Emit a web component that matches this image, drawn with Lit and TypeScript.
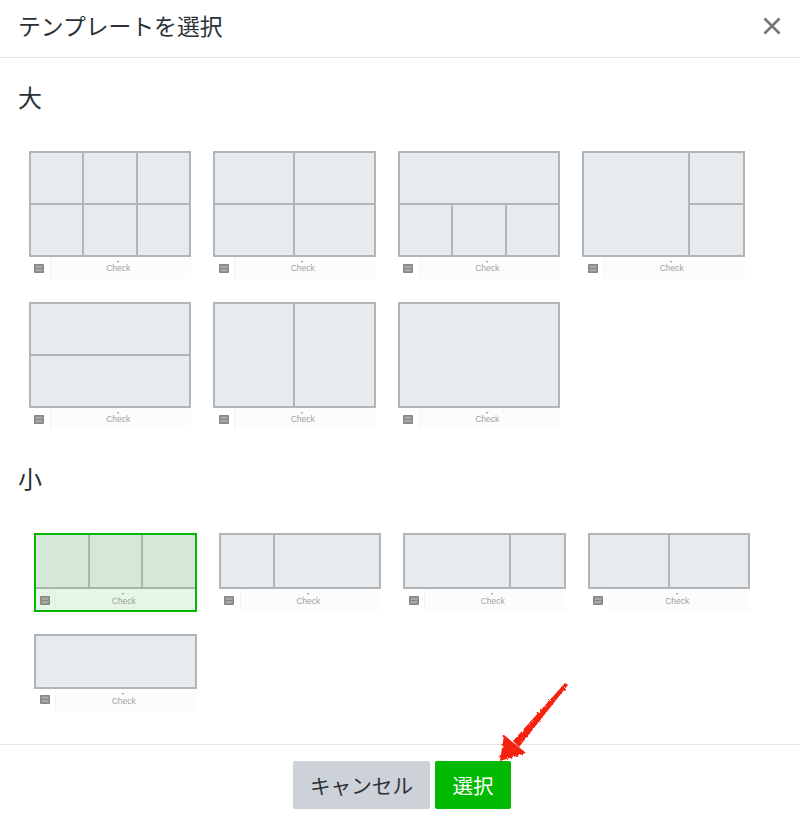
import { LitElement, html, css } from "lit";
import { customElement, property } from "lit/decorators.js";

type Layout = { cols: string; rows: string; cells: string[]; height?: number };

const large: Layout[] = [
  { cols: "1fr 1fr 1fr", rows: "1fr 1fr", cells: ["auto", "auto", "auto", "auto", "auto", "auto"] },
  { cols: "1fr 1fr", rows: "1fr 1fr", cells: ["auto", "auto", "auto", "auto"] },
  { cols: "1fr 1fr 1fr", rows: "1fr 1fr", cells: ["1 / 1 / 2 / 4", "auto", "auto", "auto"] },
  { cols: "2fr 1fr", rows: "1fr 1fr", cells: ["1 / 1 / 3 / 2", "auto", "auto"] },
  { cols: "1fr", rows: "1fr 1fr", cells: ["auto", "auto"] },
  { cols: "1fr 1fr", rows: "1fr", cells: ["auto", "auto"] },
  { cols: "1fr", rows: "1fr", cells: ["auto"] },
];

const small: Layout[] = [
  { cols: "1fr 1fr 1fr", rows: "1fr", cells: ["auto", "auto", "auto"] },
  { cols: "1fr 2fr", rows: "1fr", cells: ["auto", "auto"] },
  { cols: "2fr 1fr", rows: "1fr", cells: ["auto", "auto"] },
  { cols: "1fr 1fr", rows: "1fr", cells: ["auto", "auto"] },
  { cols: "1fr", rows: "1fr", cells: ["auto"], height: 54.5 },
];

@customElement("template-tile")
class TemplateTile extends LitElement {
  @property({ attribute: false }) layout!: Layout;
  @property({ type: Boolean }) selected = false;
  @property({ type: Boolean }) short = false;

  static styles = css`
    :host { display: block; width: 162.5px; }
    .tile { position: relative; }
    .body {
      display: grid; gap: 2px; padding: 2px; background: #b1b5b8;
      height: 106px; box-sizing: border-box;
    }
    .short .body { height: 56px; }
    .cell { background: #e8ebee; }
    .foot { display: flex; height: 22px; background: #fcfcfc; }
    .menu {
      width: 22px; flex: none; display: flex; align-items: center; justify-content: center;
      border-right: 1px solid #f4f4f4; background: #fff; box-sizing: border-box;
    }
    .check {
      flex: 1; position: relative; text-align: center; font: 8.5px/23px "Liberation Sans", sans-serif;
      color: #a0a0a0; padding-right: 5px;
    }
    .short .check { line-height: 24px; }
    .check::before {
      content: ""; position: absolute; left: 50%; top: 4px; margin-left: -4px;
      border: 1.5px solid transparent; border-top: 2px solid #888; border-bottom: 0;
    }
    .selected { outline: 2px solid #00b900; outline-offset: -2px; }
    .selected .body { background: #a9b5ac; }
    .selected .cell { background: #d6e7da; }
    .selected .foot { background: #e5f5e6; height: 23px; }
    .selected .menu { background: transparent; border-right-color: #dcefdd; }
  `;

  render() {
    const l = this.layout;
    const h = l.height ? `height:${l.height}px;` : "";
    return html`<div class="tile ${this.selected ? "selected" : ""} ${this.short ? "short" : ""}">
      <div class="body" style="${h}grid-template-columns:${l.cols};grid-template-rows:${l.rows}">
        ${l.cells.map((a) => html`<div class="cell" style="grid-area:${a}"></div>`)}
      </div>
      <div class="foot">
        <div class="menu">
          <svg width="10" height="9" viewBox="0 0 10 9">
            <rect width="10" height="9" rx="1" fill="#858585" />
            <rect x="1.5" y="1.5" width="7" height="6" fill="#a8a8a8" />
            <path d="M1.5 4.5h7" stroke="#858585" stroke-width="1" />
          </svg>
        </div>
        <div class="check">Check</div>
      </div>
    </div>`;
  }
}

@customElement("app-root")
class AppRoot extends LitElement {
  static styles = css`
    :host {
      display: block; position: relative; width: 800px; height: 814px; background: #fff; overflow: hidden;
      font-family: "Noto Sans CJK JP", "Liberation Sans", sans-serif; color: #2b3138;
    }
    .root { display: flex; flex-direction: column; height: 100%; }
    header {
      height: 58px; box-sizing: border-box; flex: none; display: flex; align-items: center;
      justify-content: space-between; padding: 0 17px 5px 18px; border-bottom: 1px solid #e8e8e8;
    }
    h1 { margin: 0; font-size: 22.8px; font-weight: 400; line-height: 1; }
    .close { display: block; }
    main { flex: 1; padding: 25px 18px 0; }
    h2 { margin: 0; font-size: 24px; font-weight: 400; line-height: 28px; height: 28px; }
    .grid {
      display: grid; grid-template-columns: repeat(4, 162.5px); column-gap: 22px;
      margin-top: 40px; padding-left: 10.5px; row-gap: 23px;
    }
    .grid.small { padding-left: 16px; margin-top: 41px; row-gap: 22px; }
    .second { margin-top: 34px; }
    footer {
      height: 70px; box-sizing: border-box; flex: none; display: flex; justify-content: center;
      gap: 5px; padding: 16px 0 0 4px; border-top: 1px solid #e8e8e8;
    }
    button {
      height: 48px; border: 0; border-radius: 2px; font: 400 20.6px/48px "Noto Sans CJK JP", sans-serif;
      padding: 0; color: #2b3138;
    }
    .cancel { width: 137px; background: #cdd2d9; }
    .ok { width: 76px; background: #00b900; color: #fff; }
    .arrow { position: absolute; left: 490px; top: 675px; }
  `;

  render() {
    return html`<div class="root">
        <header>
          <h1>テンプレートを選択</h1>
          <svg class="close" width="22" height="22" viewBox="0 0 22 22">
            <path d="M3.5 3.5l15 15M18.5 3.5l-15 15" stroke="#757575" stroke-width="2.6" fill="none" />
          </svg>
        </header>
        <main>
          <h2>大</h2>
          <div class="grid">
            ${large.map((l) => html`<template-tile .layout=${l}></template-tile>`)}
          </div>
          <h2 class="second">小</h2>
          <div class="grid small">
            ${small.map(
              (l, i) => html`<template-tile .layout=${l} short ?selected=${i === 0}></template-tile>`
            )}
          </div>
        </main>
        <footer>
          <button class="cancel">キャンセル</button>
          <button class="ok">選択</button>
        </footer>
      </div>
      <svg class="arrow" width="90" height="100" viewBox="0 0 90 100">
        <defs>
          <filter id="rough" x="-20%" y="-20%" width="140%" height="140%">
            <feTurbulence type="fractalNoise" baseFrequency="0.35" numOctaves="2" seed="3" />
            <feDisplacementMap in="SourceGraphic" scale="3" />
          </filter>
        </defs>
        <g filter="url(#rough)" fill="#f5200f">
          <path d="M75 8L78 10L29 72L23 66Z" />
          <path d="M14 60L36 78L10 86Z" />
        </g>
      </svg>`;
  }
}
